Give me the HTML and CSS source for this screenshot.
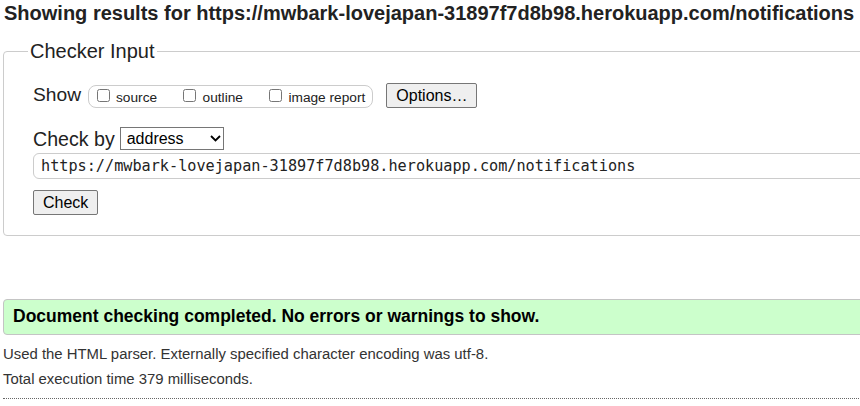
FILE: index.html
```html
<!DOCTYPE html>
<html lang="en">
<head>
<meta charset="utf-8">
<title>Nu Html Checker</title>
<link rel="stylesheet" href="styles.css">
</head>
<body>
<h1 class="title">Showing results for https://mwbark-lovejapan-31897f7d8b98.herokuapp.com/notifications</h1>
<form class="checker-form">
  <fieldset class="checker">
    <legend class="checker-legend">Checker Input</legend>
    <div class="row row-show">
      <span class="row-label row-label-show">Show</span>
      <div class="group">
        <label class="opt"><input type="checkbox" class="cb"><span class="opt-text">source</span></label>
        <label class="opt"><input type="checkbox" class="cb"><span class="opt-text">outline</span></label>
        <label class="opt"><input type="checkbox" class="cb"><span class="opt-text">image report</span></label>
      </div>
      <button type="button" class="btn btn-options">Options…</button>
    </div>
    <div class="row row-by">
      <span class="row-label row-label-by">Check by</span>
      <span class="select-wrap">
        <select class="sel"><option>address</option></select>
        <svg class="chev" width="11" height="7" viewBox="0 0 11 7"><path d="M1 1 L5.5 5.5 L10 1" fill="none" stroke="#000" stroke-width="1.8"/></svg>
      </span>
    </div>
    <input class="url" type="text" value="https://mwbark-lovejapan-31897f7d8b98.herokuapp.com/notifications">
    <div class="row-submit"><button type="button" class="btn">Check</button></div>
  </fieldset>
</form>
<p class="success">Document checking completed. No errors or warnings to show.</p>
<p class="details details-first">Used the HTML parser. Externally specified character encoding was utf-8.</p>
<p class="details">Total execution time 379 milliseconds.</p>
<hr class="rule">
</body>
</html>
```
FILE: styles.css
```css
html {
  overflow: hidden;
  background: #fff;
}
body {
  margin: 0;
  padding: 0 0 0 3px;
  width: 1100px;
  font-family: "Liberation Sans", Arial, sans-serif;
  color: #222;
}
.title {
  margin: 2px 0 0 1px;
  font-size: 20px;
  line-height: 23px;
  font-weight: bold;
  color: #222;
  white-space: nowrap;
}
.checker-form {
  margin: 0;
}
.checker {
  margin: 15px 0 0;
  padding: 21px 29px 20px;
  border: 1px solid #ccc;
  border-radius: 4px;
  min-width: 0;
}
.checker-legend {
  margin-left: -5px;
  padding: 0 2px;
  font-size: 20px;
  line-height: 22px;
  color: #222;
}
.row {
  display: flex;
  align-items: center;
}
.row-show {
  height: 25px;
}
.row-label {
  font-size: 19.2px;
  line-height: 22px;
}
.row-label-show {
  margin-right: 7px;
  margin-bottom: 2px;
}
.row-label-by {
  font-size: 19.6px;
}
.group {
  box-sizing: border-box;
  height: 23px;
  display: flex;
  align-items: center;
  gap: 26px;
  padding: 0 7px 0 7.5px;
  border: 1px solid #ccc;
  border-radius: 8px;
  margin-top: 1px;
}
.opt {
  display: flex;
  align-items: baseline;
  font-size: 13.7px;
  line-height: 16px;
  color: #222;
  padding-top: 3px;
}
.cb {
  width: 13px;
  height: 13px;
  margin: 0 6.5px 0 0;
}
.btn {
  box-sizing: border-box;
  height: 25px;
  padding: 0 9px;
  font-family: "Liberation Sans", Arial, sans-serif;
  font-size: 16px;
  color: #000;
  background: #efefef;
  border: 1px solid #767676;
  border-radius: 2px;
}
.btn-options {
  margin-left: 13px;
}
.row-by {
  margin-top: 19px;
  height: 23px;
}
.select-wrap {
  position: relative;
  display: inline-flex;
  margin-left: 5px;
}
.sel {
  appearance: none;
  -webkit-appearance: none;
  box-sizing: border-box;
  width: 104px;
  height: 23px;
  padding: 0 0 0 6px;
  font-family: "Liberation Sans", Arial, sans-serif;
  font-size: 16px;
  color: #000;
  background: #fff;
  border: 1px solid #767676;
  border-radius: 0;
}
.chev {
  position: absolute;
  right: 3px;
  top: 8px;
  pointer-events: none;
}
.url {
  display: block;
  box-sizing: border-box;
  width: 1000px;
  height: 26px;
  margin: 3px 0 0;
  padding: 0 0 0 7px;
  font-family: "DejaVu Sans Mono", monospace;
  font-size: 15.2px;
  color: #222;
  border: 1px solid #ccc;
  border-radius: 6px;
  outline: none;
}
.row-submit {
  margin-top: 11px;
  display: flex;
}
.success {
  margin: 63px 0 0;
  padding: 5px 9px 7px;
  font-size: 17.5px;
  line-height: 22px;
  font-weight: bold;
  color: #000;
  background: #ccffcc;
  border: 1px solid #c4c4c4;
  border-radius: 4px;
}
.details {
  margin: 8px 0 0;
  font-size: 14.9px;
  line-height: 17px;
  color: #333;
}
.details-first {
  margin-top: 11px;
}
.rule {
  margin: 10px 0 0;
  height: 0;
  border: 0;
  border-top: 1px dotted #666;
}
```
